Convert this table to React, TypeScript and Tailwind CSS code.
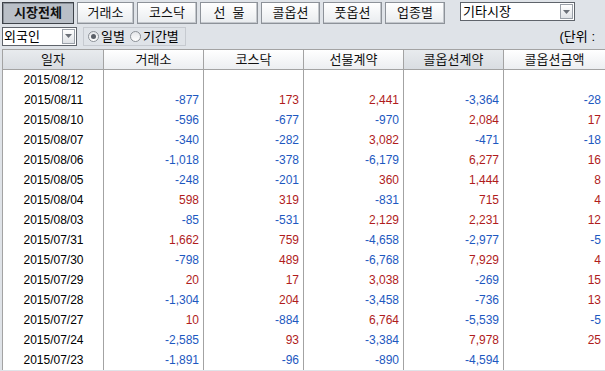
import React, { useState } from "react";

const FONT = { fontFamily: '"Liberation Sans", "Noto Sans CJK KR", sans-serif' };

const tabs = ["시장전체", "거래소", "코스닥", "선  물", "콜옵션", "풋옵션", "업종별"];
const tabWidths = ["w-[72px]", "w-[57px]", "w-[60px]", "w-[58px]", "w-[59px]", "w-[59px]", "w-[60px]"];

const columns = ["일자", "거래소", "코스닥", "선물계약", "콜옵션계약", "콜옵션금액"];

const rows: string[][] = [
  ["2015/08/12", "", "", "", "", ""],
  ["2015/08/11", "-877", "173", "2,441", "-3,364", "-28"],
  ["2015/08/10", "-596", "-677", "-970", "2,084", "17"],
  ["2015/08/07", "-340", "-282", "3,082", "-471", "-18"],
  ["2015/08/06", "-1,018", "-378", "-6,179", "6,277", "16"],
  ["2015/08/05", "-248", "-201", "360", "1,444", "8"],
  ["2015/08/04", "598", "319", "-831", "715", "4"],
  ["2015/08/03", "-85", "-531", "2,129", "2,231", "12"],
  ["2015/07/31", "1,662", "759", "-4,658", "-2,977", "-5"],
  ["2015/07/30", "-798", "489", "-6,768", "7,929", "4"],
  ["2015/07/29", "20", "17", "3,038", "-269", "15"],
  ["2015/07/28", "-1,304", "204", "-3,458", "-736", "13"],
  ["2015/07/27", "10", "-884", "6,764", "-5,539", "-5"],
  ["2015/07/24", "-2,585", "93", "-3,384", "7,978", "25"],
  ["2015/07/23", "-1,891", "-96", "-890", "-4,594", ""],
];

function ArrowBox() {
  return (
    <div className="w-[13px] h-[15px] border border-[#9aa0a8] bg-gradient-to-b from-white to-[#dfe2e6] flex items-center justify-center">
      <svg width="7" height="4" viewBox="0 0 7 4">
        <path d="M0 0 H7 L3.5 4 Z" fill="#6b7078" />
      </svg>
    </div>
  );
}

function Radio({ checked, label, onClick }: { checked: boolean; label: string; onClick: () => void }) {
  return (
    <div className="flex items-center gap-[2px] cursor-pointer" onClick={onClick}>
      <div className="w-[11px] h-[11px] rounded-full border border-[#8c9197] bg-gradient-to-b from-[#e4e6e9] to-white flex items-center justify-center">
        {checked && <div className="w-[5px] h-[5px] rounded-full bg-[#5b6068]" />}
      </div>
      <span className="text-[13px] text-black leading-none">{label}</span>
    </div>
  );
}

export default function App() {
  const [active, setActive] = useState(0);
  const [period, setPeriod] = useState("day");

  const valueColor = (v: string) => (v.startsWith("-") ? "text-[#1d58c0]" : "text-[#b01c1c]");

  return (
    <div className="w-[605px] h-[371px] bg-[#dfe3e8] overflow-hidden select-none" style={FONT}>
      {/* Market tabs */}
      <div className="flex items-start h-[26px] pt-[2px] pl-[2px]">
        <div className="flex gap-[3px]">
          {tabs.map((t, i) => {
            const on = i === active;
            return (
              <button
                key={t}
                onClick={() => setActive(i)}
                className={`${tabWidths[i]} h-[22px] flex items-center justify-center text-[13px] whitespace-pre ${
                  on
                    ? "bg-[#b9bfc7] border border-[#3e434a] shadow-[inset_1px_1px_0_#8a9098] font-bold text-[#111]"
                    : "bg-gradient-to-b from-white to-[#e9ecef] border border-[#8d9299] shadow-[inset_-1px_-1px_0_#c3c7cc] text-[#111]"
                }`}
              >
                {t}
              </button>
            );
          })}
        </div>
        <div className="ml-[15px] w-[115px] h-[19px] border border-[#5f646b] bg-white flex items-center justify-between pl-[2px] pr-[1px]">
          <span className="text-[13px] text-black leading-none">기타시장</span>
          <ArrowBox />
        </div>
      </div>

      {/* Investor / period */}
      <div className="flex items-center h-[20px] pl-[2px] pr-[10px]">
        <div className="w-[75px] h-[19px] border border-[#5f646b] bg-white flex items-center justify-between pl-[1px] pr-[1px]">
          <span className="text-[13px] text-black leading-none">외국인</span>
          <ArrowBox />
        </div>
        <div className="ml-[6px] w-[103px] h-[19px] border border-[#c6cad0] flex items-center gap-[5px] pl-[4px]">
          <Radio checked={period === "day"} label="일별" onClick={() => setPeriod("day")} />
          <Radio checked={period === "range"} label="기간별" onClick={() => setPeriod("range")} />
        </div>
        <div className="flex-1 flex justify-end">
          <span className="text-[13px] text-black leading-none">(단위 :</span>
        </div>
      </div>

      {/* Grid */}
      <div className="mt-[3px] ml-[2px] border-l border-t border-[#a3a3a3] bg-white">
        <div className="grid grid-cols-[101px_100px_100px_100px_100px_1fr] border-b border-[#a3a3a3]">
          {columns.map((c, i) => {
            const dark = i === 0 || i === 4;
            return (
              <div
                key={c}
                className={`h-[19px] flex items-center justify-center text-[13px] text-[#111] ${
                  i < 5 ? "border-r border-[#a3a3a3]" : ""
                } ${
                  dark
                    ? "bg-gradient-to-b from-[#e8ebee] to-[#d9dde2]"
                    : "bg-gradient-to-b from-white to-[#eceef1]"
                }`}
              >
                {c}
              </div>
            );
          })}
        </div>
        <div className="flex flex-col">
          {rows.map((r) => (
            <div key={r[0]} className="grid grid-cols-[101px_100px_100px_100px_100px_1fr] h-[20px]">
              {r.map((v, i) => (
                <div
                  key={i}
                  className={`flex items-center text-[12px] leading-none ${
                    i < 5 ? "border-r border-[#a3a3a3]" : ""
                  } ${i === 0 ? "justify-center text-black pl-[1px]" : `justify-end pr-[4px] ${valueColor(v)}`}`}
                >
                  {v}
                </div>
              ))}
            </div>
          ))}
        </div>
      </div>
    </div>
  );
}
